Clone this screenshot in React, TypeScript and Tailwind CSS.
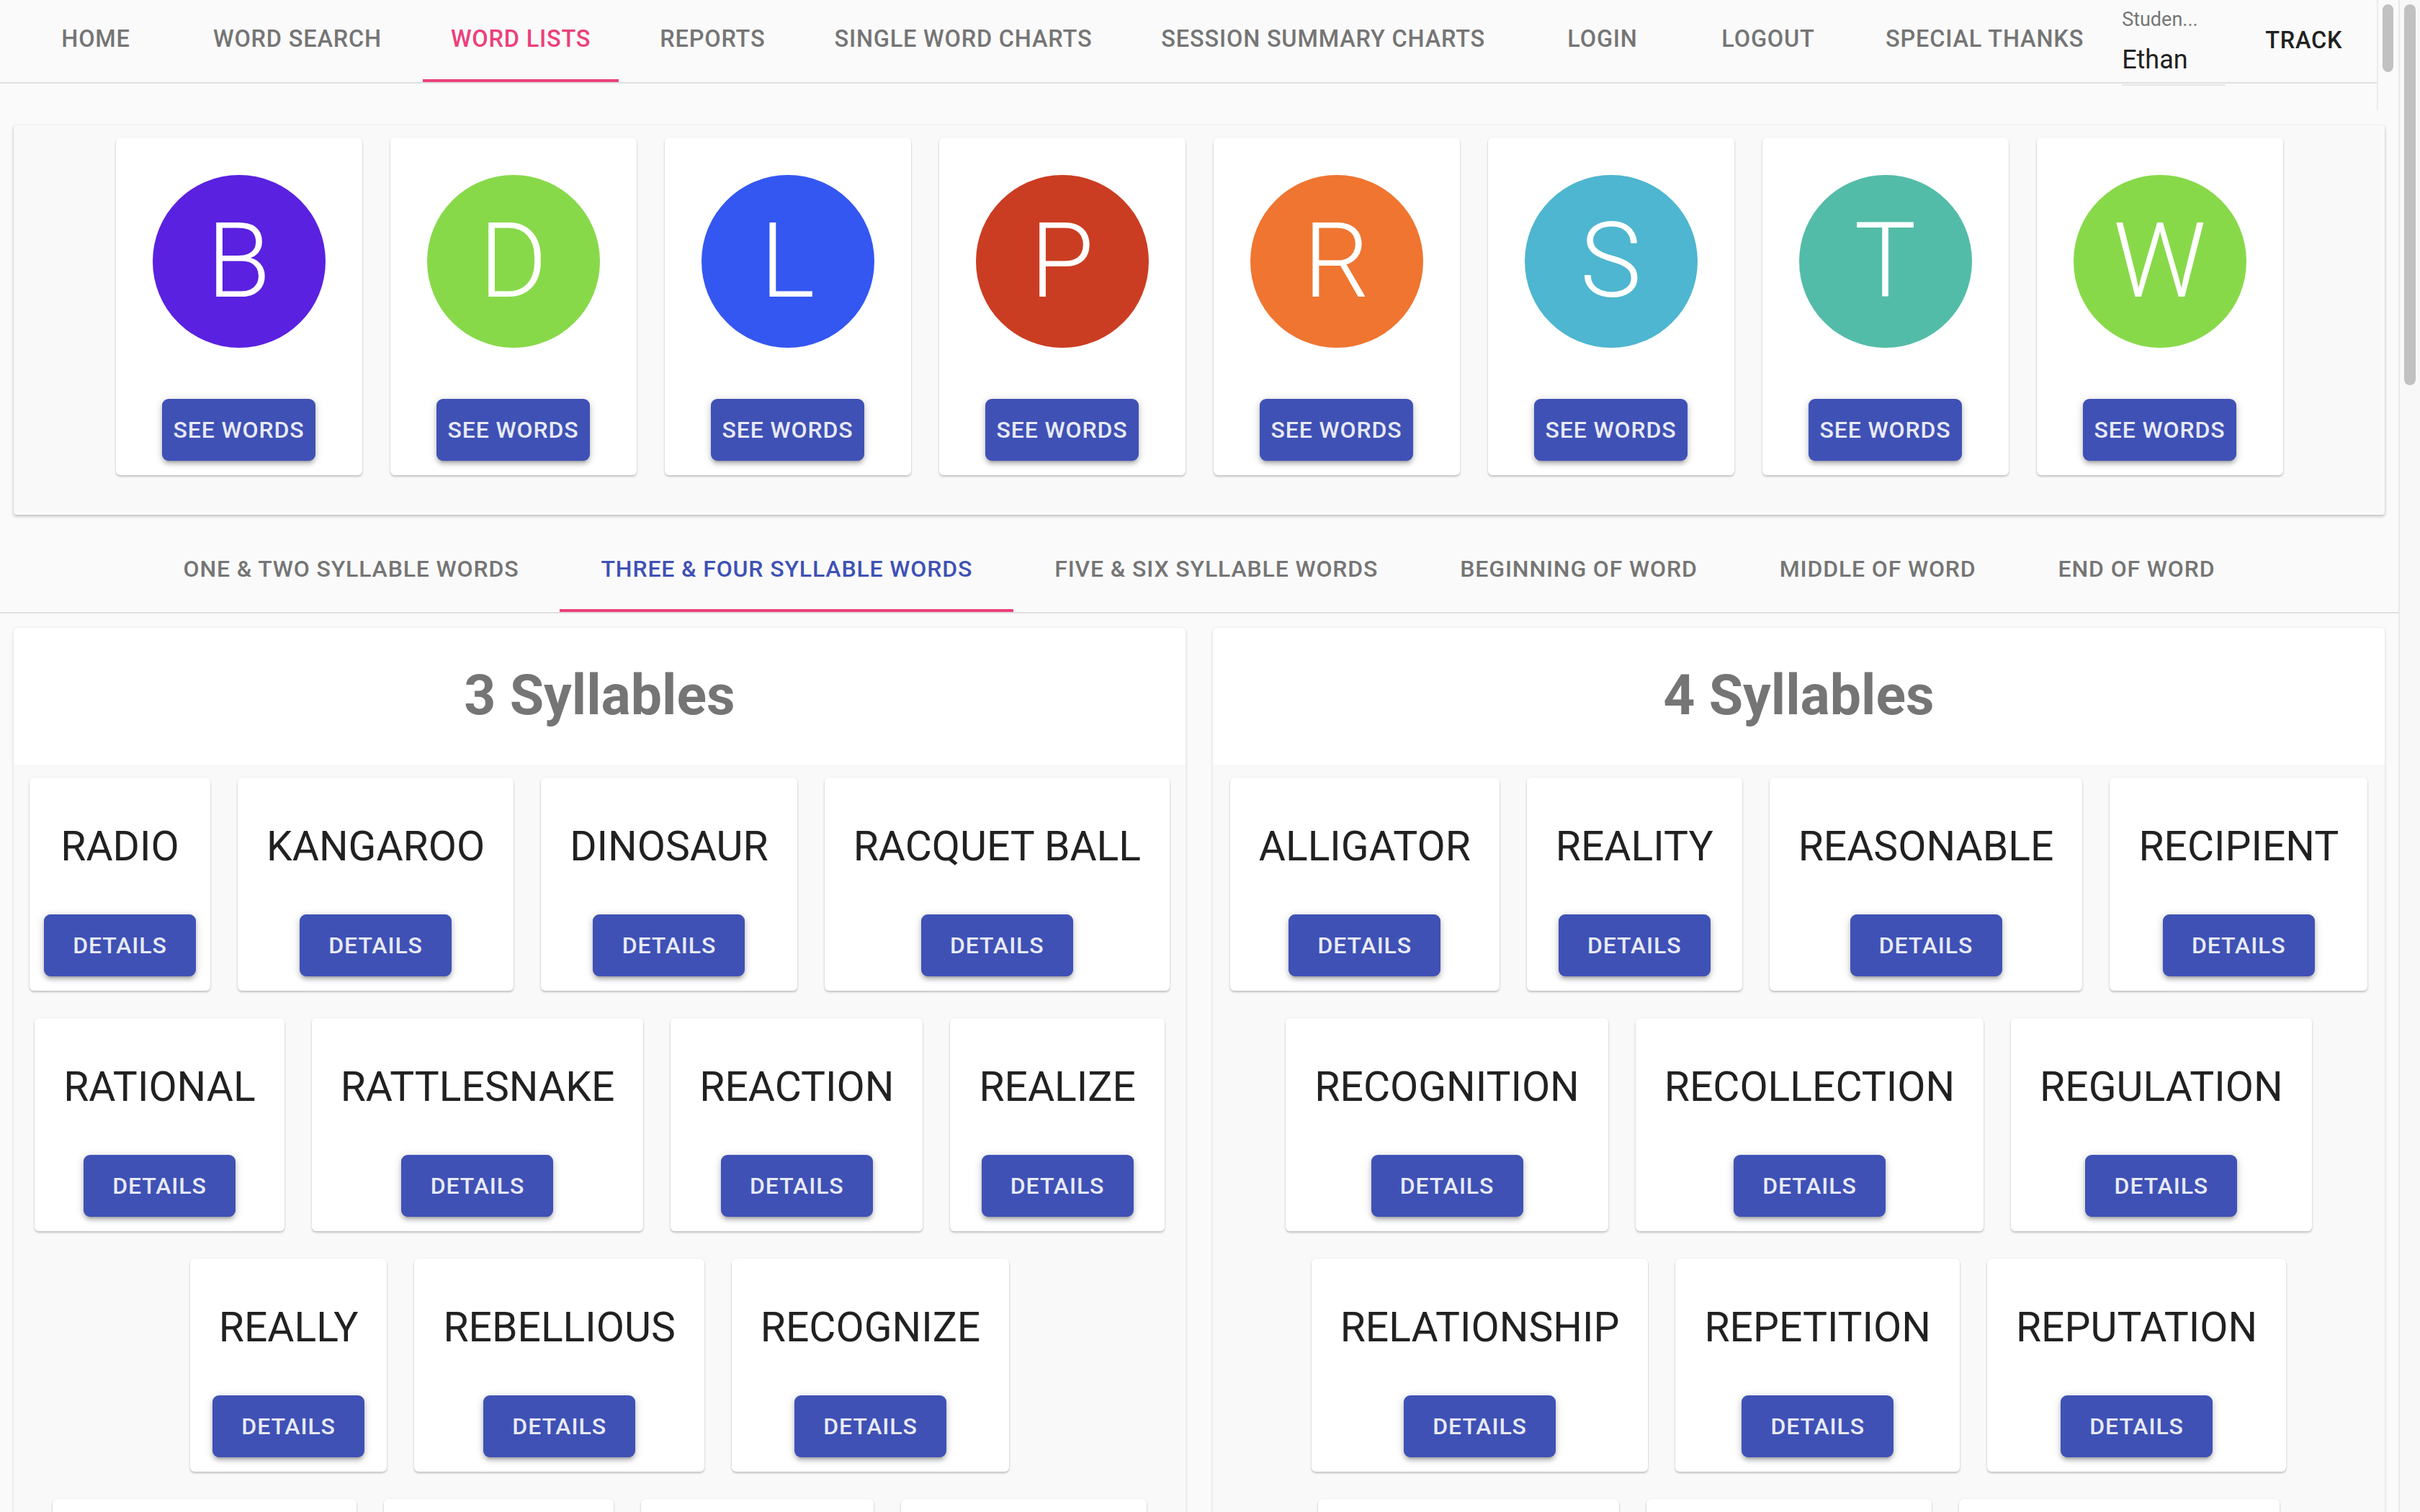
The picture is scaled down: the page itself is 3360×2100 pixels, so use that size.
import React from 'react'

const navItems = [
  'HOME',
  'WORD SEARCH',
  'WORD LISTS',
  'REPORTS',
  'SINGLE WORD CHARTS',
  'SESSION SUMMARY CHARTS',
  'LOGIN',
  'LOGOUT',
  'SPECIAL THANKS',
]

const letters = [
  { l: 'B', c: 'bg-[#5a21e0]' },
  { l: 'D', c: 'bg-[#88d94a]' },
  { l: 'L', c: 'bg-[#3457f1]' },
  { l: 'P', c: 'bg-[#cb3d22]' },
  { l: 'R', c: 'bg-[#ef7531]' },
  { l: 'S', c: 'bg-[#4eb6d0]' },
  { l: 'T', c: 'bg-[#53bca8]' },
  { l: 'W', c: 'bg-[#88d94a]' },
]

const syllableTabs = [
  'ONE & TWO SYLLABLE WORDS',
  'THREE & FOUR SYLLABLE WORDS',
  'FIVE & SIX SYLLABLE WORDS',
  'BEGINNING OF WORD',
  'MIDDLE OF WORD',
  'END OF WORD',
]

const threeSyllables = [
  ['RADIO', 'KANGAROO', 'DINOSAUR', 'RACQUET BALL'],
  ['RATIONAL', 'RATTLESNAKE', 'REACTION', 'REALIZE'],
  ['REALLY', 'REBELLIOUS', 'RECOGNIZE'],
  ['RETIREMENT', 'REFUGEE', 'RESCUER', 'RESIDENT'],
]

const fourSyllables = [
  ['ALLIGATOR', 'REALITY', 'REASONABLE', 'RECIPIENT'],
  ['RECOGNITION', 'RECOLLECTION', 'REGULATION'],
  ['RELATIONSHIP', 'REPETITION', 'REPUTATION'],
  ['REVOLUTION', 'RIDICULOUS', 'RESPONSIBLE'],
]

const BlueButton = ({ label }: { label: string }) => (
  <button className="flex h-[86px] min-w-[211px] items-center justify-center rounded-[9px] bg-[#3f51b5] px-[15px] text-[32px] font-medium uppercase tracking-[0.9px] text-[#e8eaf6] shadow-[0_2px_12px_rgba(0,0,0,0.2),0_5px_5px_rgba(0,0,0,0.14),0_7px_2px_-5px_rgba(0,0,0,0.12)]">
    {label}
  </button>
)

const WordCard = ({ word }: { word: string }) => (
  <div className="flex h-[296px] flex-col items-center rounded-[6px] bg-white px-[20px] pb-[20px] shadow-[0_2px_3px_rgba(0,0,0,0.22),0_0_2px_rgba(0,0,0,0.08)]">
    <div className="flex h-[190px] items-center whitespace-nowrap px-[20px] text-[57px] leading-none text-[#212121]">
      {word}
    </div>
    <BlueButton label="Details" />
  </div>
)

const SyllablePanel = ({ title, rows }: { title: string; rows: string[][] }) => (
  <div className="flex flex-col overflow-hidden rounded-[6px] bg-[#f9f9f9] shadow-[0_1px_4px_rgba(0,0,0,0.16)]">
    <div className="flex h-[190px] items-center justify-center bg-white text-[77px] font-bold text-[#757575]">
      {title}
    </div>
    <div className="flex flex-col gap-[38px] px-[20px] pb-[40px] pt-[18px]">
      {rows.map((row, i) => (
        <div key={i} className="flex justify-center gap-[38px]">
          {row.map((w) => (
            <WordCard key={w} word={w} />
          ))}
        </div>
      ))}
    </div>
  </div>
)

export default function App() {
  return (
    <div className="flex h-[2100px] w-[3360px] overflow-hidden bg-[#fafafa] font-[Roboto,sans-serif]">
      <div className="flex w-[3330px] flex-col">
        {/* top bar */}
        <div className="flex h-[153px]">
          <nav className="flex h-[116px] w-[3300px] items-start border-b-2 border-[#e0e0e0] pl-[18px]">
            {navItems.map((item) => {
              const active = item === 'WORD LISTS'
              return (
                <div
                  key={item}
                  className={`relative flex h-[114px] min-w-[230px] items-center justify-center whitespace-nowrap px-[48px] pb-[6px] text-[32.5px] font-medium tracking-[0.8px] ${
                    active ? 'text-[#ec407a]' : 'text-[#757575]'
                  }`}
                >
                  {item}
                  {active && <div className="absolute bottom-0 left-[9px] right-[9px] h-[4px] bg-[#ec407a]" />}
                </div>
              )
            })}
            <div className="ml-[5px] flex h-[119px] w-[144px] flex-col border-b-2 border-[#e6e6e6]">
              <span className="mt-[14px] text-[27px] leading-none text-[#757575]">Studen...</span>
              <span className="mt-[24px] text-[36px] leading-none text-[#212121]">Ethan</span>
            </div>
            <div className="ml-[55px] flex h-[114px] items-center pb-[2px] text-[32.5px] font-medium tracking-[0.8px] text-[#212121]">
              TRACK
            </div>
          </nav>
          <div className="relative h-[153px] w-[30px] border-l-2 border-[#ececec] bg-[#fafafa]">
            <div className="absolute left-[6px] top-[6px] h-[94px] w-[15px] rounded-full bg-[#c1c1c1]" />
          </div>
        </div>

        {/* letter cards */}
        <div className="mx-[19px] mt-[21px] flex justify-center gap-[39px] rounded-[4px] bg-[#f9f9f9] pb-[55px] pt-[17px] shadow-[0_2px_4px_rgba(0,0,0,0.25),0_0_2px_rgba(0,0,0,0.06)]">
          {letters.map((item) => (
            <div
              key={item.l}
              className="flex h-[469px] w-[342px] flex-col items-center rounded-[6px] bg-white pt-[52px] shadow-[0_2px_3px_rgba(0,0,0,0.22),0_0_2px_rgba(0,0,0,0.08)]"
            >
              <div className={`flex size-[240px] items-center justify-center rounded-full ${item.c} text-[144px] font-light leading-none text-white`}>
                {item.l}
              </div>
              <div className="mt-[71px]">
                <BlueButton label="See words" />
              </div>
            </div>
          ))}
        </div>

        {/* syllable tabs */}
        <div className="mt-[18px] flex h-[119px] justify-center border-b-2 border-[#e0e0e0]">
          {syllableTabs.map((t) => {
            const active = t === 'THREE & FOUR SYLLABLE WORDS'
            return (
              <div
                key={t}
                className={`relative flex h-[117px] items-center whitespace-nowrap px-[57px] pb-[3px] text-[32px] font-medium tracking-[0.85px] ${
                  active ? 'text-[#3f51b5]' : 'text-[#757575]'
                }`}
              >
                {t}
                {active && <div className="absolute bottom-0 left-0 right-0 h-[4px] bg-[#ec407a]" />}
              </div>
            )
          })}
        </div>

        {/* word lists */}
        <div className="mx-[19px] mt-[20px] grid grid-cols-2 gap-[38px]">
          <SyllablePanel title="3 Syllables" rows={threeSyllables} />
          <SyllablePanel title="4 Syllables" rows={fourSyllables} />
        </div>
      </div>

      {/* page scrollbar */}
      <div className="relative h-[2100px] w-[30px] border-l-2 border-[#e8e8e8] bg-[#f8f8f8]">
        <div className="absolute left-[6px] top-[6px] h-[529px] w-[16px] rounded-full bg-[#c1c1c1]" />
      </div>
    </div>
  )
}
